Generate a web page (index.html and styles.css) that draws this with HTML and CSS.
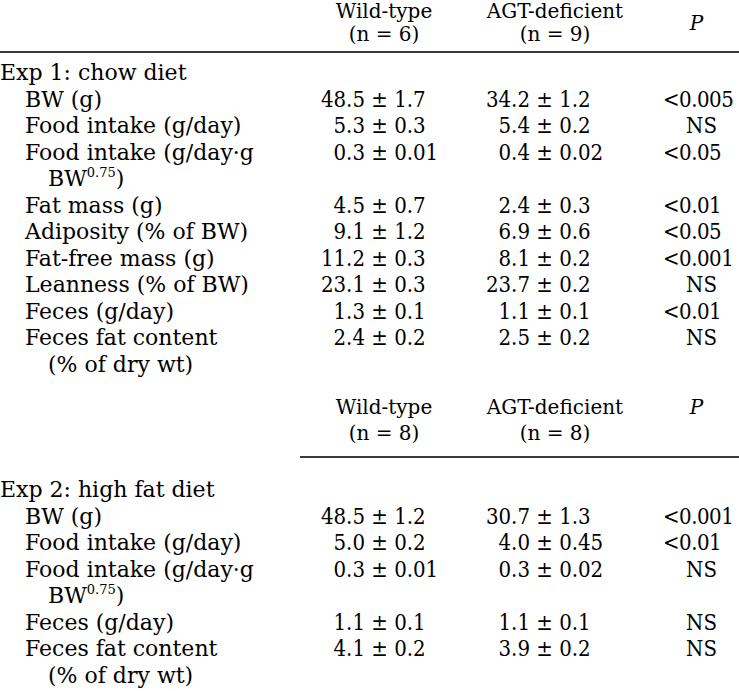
FILE: index.html
```html
<!DOCTYPE html>
<html lang="en">
<head>
    <meta charset="UTF-8">
    <meta name="viewport" content="width=device-width, initial-scale=1.0">
    <title>Body weight and food intake</title>
    <link rel="stylesheet" href="styles.css">
</head>
<body>
    <table class="data">
        <colgroup>
            <col class="c-label">
            <col class="c-wt">
            <col class="c-agt">
            <col class="c-p">
        </colgroup>
        <thead>
            <tr class="head">
                <th></th>
                <th>Wild-type<br>(n = 6)</th>
                <th>AGT-deficient<br>(n = 9)</th>
                <th class="p">P</th>
            </tr>
        </thead>
        <tbody>
            <tr class="section"><td colspan="4">Exp 1: chow diet</td></tr>
            <tr>
                <td class="label">BW (g)</td>
                <td class="num"><span class="int">48.5</span> ± 1.7</td>
                <td class="num"><span class="int">34.2</span> ± 1.2</td>
                <td class="pv">&lt;0.005</td>
            </tr>
            <tr>
                <td class="label">Food intake (g/day)</td>
                <td class="num"><span class="int">5.3</span> ± 0.3</td>
                <td class="num"><span class="int">5.4</span> ± 0.2</td>
                <td class="pv ns">NS</td>
            </tr>
            <tr>
                <td class="label">Food intake (g/day·g<br>BW<sup>0.75</sup>)</td>
                <td class="num"><span class="int">0.3</span> ± 0.01</td>
                <td class="num"><span class="int">0.4</span> ± 0.02</td>
                <td class="pv">&lt;0.05</td>
            </tr>
            <tr>
                <td class="label">Fat mass (g)</td>
                <td class="num"><span class="int">4.5</span> ± 0.7</td>
                <td class="num"><span class="int">2.4</span> ± 0.3</td>
                <td class="pv">&lt;0.01</td>
            </tr>
            <tr>
                <td class="label">Adiposity (% of BW)</td>
                <td class="num"><span class="int">9.1</span> ± 1.2</td>
                <td class="num"><span class="int">6.9</span> ± 0.6</td>
                <td class="pv">&lt;0.05</td>
            </tr>
            <tr>
                <td class="label">Fat-free mass (g)</td>
                <td class="num"><span class="int">11.2</span> ± 0.3</td>
                <td class="num"><span class="int">8.1</span> ± 0.2</td>
                <td class="pv">&lt;0.001</td>
            </tr>
            <tr>
                <td class="label">Leanness (% of BW)</td>
                <td class="num"><span class="int">23.1</span> ± 0.3</td>
                <td class="num"><span class="int">23.7</span> ± 0.2</td>
                <td class="pv ns">NS</td>
            </tr>
            <tr>
                <td class="label">Feces (g/day)</td>
                <td class="num"><span class="int">1.3</span> ± 0.1</td>
                <td class="num"><span class="int">1.1</span> ± 0.1</td>
                <td class="pv">&lt;0.01</td>
            </tr>
            <tr>
                <td class="label">Feces fat content<br>(% of dry wt)</td>
                <td class="num"><span class="int">2.4</span> ± 0.2</td>
                <td class="num"><span class="int">2.5</span> ± 0.2</td>
                <td class="pv ns">NS</td>
            </tr>

            <!-- second experiment has its own group header -->
            <tr class="head head2">
                <th></th>
                <th>Wild-type<br>(n = 8)</th>
                <th>AGT-deficient<br>(n = 8)</th>
                <th class="p">P</th>
            </tr>
            <tr class="section"><td colspan="4">Exp 2: high fat diet</td></tr>
            <tr>
                <td class="label">BW (g)</td>
                <td class="num"><span class="int">48.5</span> ± 1.2</td>
                <td class="num"><span class="int">30.7</span> ± 1.3</td>
                <td class="pv">&lt;0.001</td>
            </tr>
            <tr>
                <td class="label">Food intake (g/day)</td>
                <td class="num"><span class="int">5.0</span> ± 0.2</td>
                <td class="num"><span class="int">4.0</span> ± 0.45</td>
                <td class="pv">&lt;0.01</td>
            </tr>
            <tr>
                <td class="label">Food intake (g/day·g<br>BW<sup>0.75</sup>)</td>
                <td class="num"><span class="int">0.3</span> ± 0.01</td>
                <td class="num"><span class="int">0.3</span> ± 0.02</td>
                <td class="pv ns">NS</td>
            </tr>
            <tr>
                <td class="label">Feces (g/day)</td>
                <td class="num"><span class="int">1.1</span> ± 0.1</td>
                <td class="num"><span class="int">1.1</span> ± 0.1</td>
                <td class="pv ns">NS</td>
            </tr>
            <tr>
                <td class="label">Feces fat content<br>(% of dry wt)</td>
                <td class="num"><span class="int">4.1</span> ± 0.2</td>
                <td class="num"><span class="int">3.9</span> ± 0.2</td>
                <td class="pv ns">NS</td>
            </tr>
        </tbody>
    </table>
</body>
</html>
```

FILE: styles.css
```css
body {
    margin: 0;
    background-color: #fff;
    color: #000;
    font-family: "DejaVu Serif", "Liberation Serif", serif;
}
.data {
    width: 739px;
    table-layout: fixed;
    border-collapse: collapse;
    border-spacing: 0;
}
.c-label { width: 300px; }
.c-wt { width: 168px; }
.c-agt { width: 174px; }
.c-p { width: 97px; }

.data td,
.data th {
    padding: 0;
    vertical-align: top;
    white-space: nowrap;
}

/* column headers */
.head th {
    font-size: 20px;
    font-weight: normal;
    line-height: 23px;
    text-align: center;
    padding-bottom: 5px;
    border-bottom: 2px solid #3a3a3a;
}
.head th.p {
    font-style: italic;
    vertical-align: middle;
    padding-left: 12px;
}
.head2 th {
    line-height: 26px;
    padding-top: 16px;
    padding-bottom: 10px;
}
.head2 th.p {
    vertical-align: top;
}
.head2 th:first-child {
    border-bottom: none;
}

/* body rows */
.data td {
    font-size: 22px;
    line-height: 26.5px;
}
.section td {
    padding-top: 7px;
}
.head2 + .section td {
    padding-top: 19px;
}
.label {
    padding-left: 48px !important;
    text-indent: -23px;
}
.label sup {
    font-size: 13px;
    line-height: 0;
    vertical-align: 9px;
}
.num {
    font-stretch: semi-condensed;
}
.num .int {
    display: inline-block;
    text-align: right;
}
.num:nth-child(2) .int {
    width: 65px;
}
.num:nth-child(3) .int {
    width: 62px;
}
.pv {
    padding-left: 21px !important;
    font-stretch: condensed;
    letter-spacing: -0.5px;
}
.pv.ns {
    padding-left: 0 !important;
    text-align: center;
    text-indent: 22px;
    letter-spacing: 0;
}
```
